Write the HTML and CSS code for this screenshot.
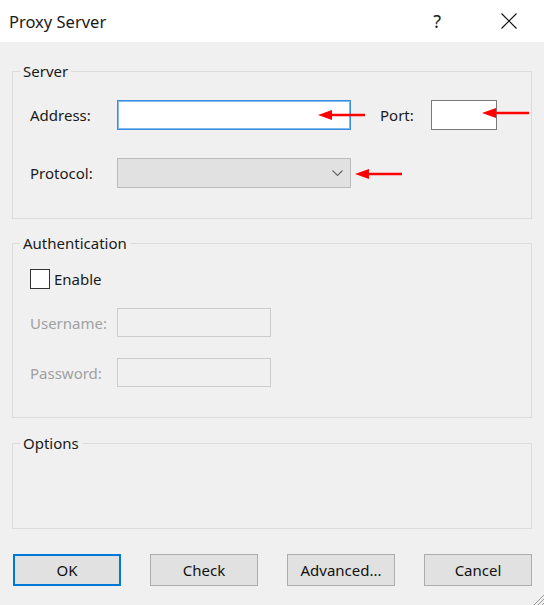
FILE: index.html
```html
<!DOCTYPE html>
<html lang="en">
<head>
    <meta charset="UTF-8">
    <title>Proxy Server</title>
    <link rel="stylesheet" href="styles.css">
</head>
<body>
    <div class="titlebar">
        <span class="title">Proxy Server</span>
        <span class="help">?</span>
        <svg class="close" width="16" height="16" viewBox="0 0 16 16">
            <path d="M0.5 0.5 L15.5 15.5 M15.5 0.5 L0.5 15.5" stroke="#111" stroke-width="1.2" fill="none"/>
        </svg>
    </div>

    <div class="dialog">
        <!-- Server -->
        <fieldset class="group server">
            <legend>Server</legend>
            <div class="row">
                <label class="lbl">Address:</label>
                <input type="text" class="field address">
                <label class="lbl port-lbl">Port:</label>
                <input type="text" class="field port">
            </div>
            <div class="row protocol-row">
                <label class="lbl">Protocol:</label>
                <div class="select">
                    <svg width="11" height="7" viewBox="0 0 11 7">
                        <path d="M0.5 0.5 L5.5 5.5 L10.5 0.5" stroke="#666" stroke-width="1.1" fill="none"/>
                    </svg>
                </div>
            </div>
        </fieldset>

        <!-- Authentication -->
        <fieldset class="group auth">
            <legend>Authentication</legend>
            <div class="check-row">
                <span class="checkbox"></span>
                <span>Enable</span>
            </div>
            <div class="row user-row">
                <label class="lbl disabled">Username:</label>
                <input type="text" class="field small" disabled>
            </div>
            <div class="row pass-row">
                <label class="lbl disabled">Password:</label>
                <input type="password" class="field small" disabled>
            </div>
        </fieldset>

        <!-- Options -->
        <fieldset class="group options">
            <legend>Options</legend>
        </fieldset>

        <div class="buttons">
            <button class="btn default">OK</button>
            <button class="btn">Check</button>
            <button class="btn">Advanced...</button>
            <button class="btn">Cancel</button>
        </div>
    </div>

    <!-- annotation arrows -->
    <svg class="arrow arrow-address" width="48" height="12" viewBox="0 0 48 12">
        <path d="M12 4.8 L47 4.8 L47 7.2 L12 7.2 Z" fill="#f00"/>
        <path d="M0 6 L14 1 L14 11 Z" fill="#f00"/>
    </svg>
    <svg class="arrow arrow-port" width="48" height="12" viewBox="0 0 48 12">
        <path d="M12 4.8 L47 4.8 L47 7.2 L12 7.2 Z" fill="#f00"/>
        <path d="M0 6 L14 1 L14 11 Z" fill="#f00"/>
    </svg>
    <svg class="arrow arrow-protocol" width="48" height="12" viewBox="0 0 48 12">
        <path d="M12 4.8 L47 4.8 L47 7.2 L12 7.2 Z" fill="#f00"/>
        <path d="M0 6 L14 1 L14 11 Z" fill="#f00"/>
    </svg>

    <svg class="grip" width="12" height="12" viewBox="0 0 12 12">
        <path d="M12 2 L2 12 M12 6 L6 12 M12 10 L10 12" stroke="#9a9a9a" stroke-width="1" fill="none"/>
    </svg>
</body>
</html>
```

FILE: styles.css
```css
body {
    margin: 0;
    padding: 0;
    width: 544px;
    height: 605px;
    background: #f0f0f0;
    font-family: "Noto Sans", "Liberation Sans", sans-serif;
    font-size: 15px;
    color: #1a1a1a;
    position: relative;
    overflow: hidden;
}

.titlebar {
    height: 42px;
    background: #fff;
    display: flex;
    align-items: center;
}
.title {
    margin-left: 9px;
    font-size: 16.5px;
    flex: 1;
}
.help {
    font-size: 18px;
    margin-right: 60px;
    color: #222;
}
.close {
    margin-right: 27px;
}

.dialog {
    padding: 0 12px;
}

.group {
    margin: 0;
    padding: 0 0 0 17px;
    border: 1px solid #dcdcdc;
    min-width: 0;
}
.group legend {
    padding: 0 3px;
    margin-left: -10px;
    line-height: 20px;
}

.server {
    margin-top: 19px;
    padding-top: 19px;
    padding-bottom: 30px;
}

.row {
    display: flex;
    align-items: center;
}
.lbl {
    width: 87px;
}
.lbl.disabled {
    color: #a0a0a0;
}
.field {
    box-sizing: border-box;
    height: 30px;
    margin: 0;
    border: 1px solid #7a7a7a;
    background: #fff;
    font: inherit;
    outline: none;
}
.field.address {
    width: 234px;
    border: 1px solid #3c8ee0;
    box-shadow: inset 0 0 0 1px #7fb7ee;
}
.port-lbl {
    width: 51px;
    margin-left: 29px;
}
.field.port {
    width: 66px;
}
.protocol-row {
    margin-top: 28px;
}
.select {
    box-sizing: border-box;
    width: 234px;
    height: 30px;
    background: #e1e1e1;
    border: 1px solid #bcbcbc;
    display: flex;
    align-items: center;
    justify-content: flex-end;
    padding-right: 7px;
}

.auth {
    margin-top: 14px;
    padding-top: 16px;
    padding-bottom: 30px;
}
.check-row {
    display: flex;
    align-items: center;
    gap: 4px;
}
.checkbox {
    box-sizing: border-box;
    width: 20px;
    height: 20px;
    border: 1px solid #333;
    background: #fff;
}
.user-row {
    margin-top: 19px;
}
.pass-row {
    margin-top: 21px;
}
.field.small {
    width: 154px;
    height: 29px;
    background: #f0f0f0;
    border: 1px solid #cccccc;
}

.options {
    margin-top: 15px;
    height: 94px;
}

.buttons {
    display: flex;
    justify-content: space-between;
    margin: 25px 0 0 1px;
}
.btn {
    box-sizing: border-box;
    width: 108px;
    height: 32px;
    background: #e1e1e1;
    border: 1px solid #adadad;
    font: inherit;
    color: #111;
    padding: 0;
}
.btn.default {
    border: 2px solid #0078d7;
}

.arrow {
    position: absolute;
}
.arrow-address {
    left: 318px;
    top: 109px;
}
.arrow-port {
    left: 482px;
    top: 107px;
}
.arrow-protocol {
    left: 355px;
    top: 168px;
}
.grip {
    position: absolute;
    right: 0;
    bottom: 0;
}
```
